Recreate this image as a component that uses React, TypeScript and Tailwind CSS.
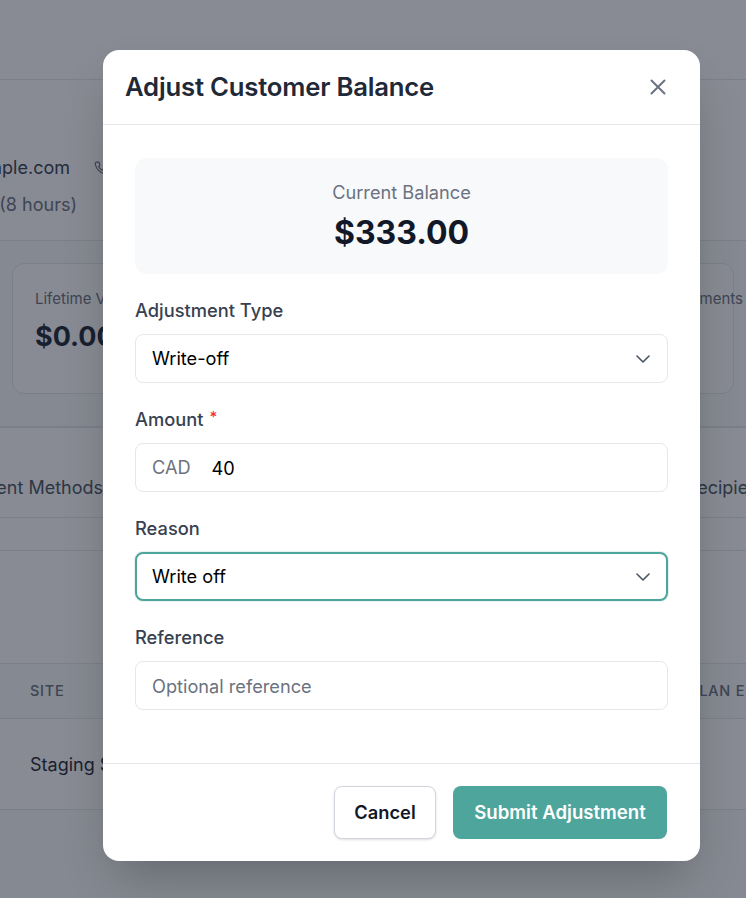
import { useState } from 'react'

function Chevron() {
  return (
    <svg
      width="14"
      height="8"
      viewBox="0 0 14 8"
      fill="none"
      stroke="#4b5563"
      strokeWidth="1.6"
      strokeLinecap="round"
      strokeLinejoin="round"
      className="pointer-events-none absolute right-[18px] top-1/2 -translate-y-1/2"
    >
      <path d="M1 1l6 6 6-6" />
    </svg>
  )
}

function Field({ label, required, children }: { label: string; required?: boolean; children: React.ReactNode }) {
  return (
    <div>
      <label className="mb-3 block text-[18.3px] leading-6 font-medium text-[#374151]">
        {label}
        {required && <span className="ml-[6px] align-top text-[15px] leading-5 text-red-500">*</span>}
      </label>
      {children}
    </div>
  )
}

function Background() {
  return (
    <div className="flex min-h-[898px] flex-col bg-[#f9fafb] text-[#374151]">
      <div className="h-[80px] border-b border-gray-200 bg-white" />

      <div className="flex h-[161px] flex-col gap-[11px] border-b border-gray-200 bg-white pt-[75px]">
        <div className="flex items-center gap-[24px] leading-[26px]">
          <div className="flex w-[70px] justify-end overflow-hidden whitespace-nowrap text-[18px]">
            john@example.com
          </div>
          <svg width="14" height="14" viewBox="0 0 24 24" fill="none" stroke="#6b7280" strokeWidth="2">
            <path d="M22 16.9v3a2 2 0 0 1-2.2 2 19.8 19.8 0 0 1-8.6-3.1 19.5 19.5 0 0 1-6-6A19.8 19.8 0 0 1 2.1 4.2 2 2 0 0 1 4.1 2h3a2 2 0 0 1 2 1.7c.1.9.4 1.8.7 2.7a2 2 0 0 1-.5 2.1L8 9.8a16 16 0 0 0 6 6l1.3-1.3a2 2 0 0 1 2.1-.4c.9.3 1.8.6 2.7.7a2 2 0 0 1 1.7 2z" />
          </svg>
        </div>
        <div className="flex w-[77px] justify-end overflow-hidden whitespace-nowrap text-[18px] leading-[26px] text-[#6b7280]">
          Customer since today (8 hours)
        </div>
      </div>

      <div className="flex h-[187px] items-start justify-between border-b-2 border-gray-200 px-[12px] pt-[22px]">
        <div className="flex h-[131px] w-[300px] flex-col gap-[6px] rounded-xl border border-gray-200 bg-white px-[22px] pt-[24px]">
          <div className="text-[15px] text-[#6b7280]">Lifetime Value</div>
          <div className="text-[27px] font-bold text-[#1f2937]">$0.00</div>
        </div>
        <div className="flex h-[131px] w-[300px] justify-end rounded-xl border border-gray-200 bg-white pt-[24px]">
          <div className="-mr-[10px] whitespace-nowrap text-[15px] text-[#6b7280]">Total Adjustments</div>
        </div>
      </div>

      <div className="flex h-[90px] items-end justify-between border-b border-gray-200 bg-white pb-[16px] text-[18px] text-[#4b5563]">
        <div className="flex w-[103px] justify-end overflow-hidden whitespace-nowrap">Payment Methods</div>
        <div className="-mr-[28px] whitespace-nowrap">Recipients</div>
      </div>
      <div className="h-[33px] border-b border-gray-200 bg-white" />
      <div className="h-[113px] border-b border-gray-200 bg-white" />
      <div className="flex h-[55px] items-center justify-between border-b border-gray-200 bg-[#f9fafb] pl-[30px] text-[14.5px] font-medium tracking-wider text-[#6b7280]">
        <span>SITE</span>
        <span className="-mr-[22px]">PLAN END</span>
      </div>
      <div className="flex h-[91px] items-center border-b border-gray-200 bg-white pl-[30px] text-[18px] text-[#1f2937]">
        Staging Site
      </div>
    </div>
  )
}

export default function App() {
  const [amount, setAmount] = useState('40')
  const [reference, setReference] = useState('')

  return (
    <div className="relative min-h-[898px] overflow-hidden font-['Inter',sans-serif]">
      <Background />

      <div className="absolute inset-0 bg-[#111827]/50" />

      <div className="absolute left-[103px] top-[50px] flex w-[597px] flex-col rounded-2xl bg-white shadow-2xl">
        <div className="flex h-[75px] items-center justify-between border-b border-gray-200 pl-[22px] pr-[34px]">
          <h2 className="text-[25.7px] font-semibold tracking-[-0.2px] text-[#1f2937]">Adjust Customer Balance</h2>
          <svg width="16" height="16" viewBox="0 0 16 16" fill="none" stroke="#6b7280" strokeWidth="2" strokeLinecap="round">
            <path d="M1.5 1.5l13 13M14.5 1.5l-13 13" />
          </svg>
        </div>

        <div className="flex flex-col gap-6 px-8 pt-[33px] pb-[53px]">
          <div className="flex h-[116px] flex-col items-center justify-center gap-[11px] rounded-xl bg-[#f8f9fb] pb-[2px]">
            <div className="text-[18.2px] leading-6 text-[#6b7280]">Current Balance</div>
            <div className="text-[32px] leading-9 font-bold text-[#111827]">$333.00</div>
          </div>

          <Field label="Adjustment Type">
            <div className="relative">
              <select
                defaultValue="write-off"
                className="h-[49px] w-full appearance-none rounded-lg border border-gray-200 bg-white px-4 text-[18.2px] text-black outline-none"
              >
                <option value="credit">Credit</option>
                <option value="debit">Debit</option>
                <option value="write-off">Write-off</option>
              </select>
              <Chevron />
            </div>
          </Field>

          <Field label="Amount" required>
            <div className="flex h-[49px] items-center rounded-lg border border-gray-200 bg-white pl-4">
              <span className="text-[18.2px] text-[#6b7280]">CAD</span>
              <input
                value={amount}
                onChange={(e) => setAmount(e.target.value)}
                className="ml-[21px] h-full flex-1 bg-transparent text-[18.2px] text-black outline-none"
              />
            </div>
          </Field>

          <Field label="Reason">
            <div className="relative">
              <select
                defaultValue="write-off"
                className="h-[49px] w-full appearance-none rounded-lg border-2 border-[#4ea59c] bg-white px-[15px] text-[18.2px] text-black shadow-[0_0_0_1px_rgba(78,165,156,0.15)] outline-none"
              >
                <option value="write-off">Write off</option>
                <option value="goodwill">Goodwill</option>
                <option value="correction">Correction</option>
              </select>
              <Chevron />
            </div>
          </Field>

          <Field label="Reference">
            <input
              value={reference}
              onChange={(e) => setReference(e.target.value)}
              placeholder="Optional reference"
              className="h-[49px] w-full rounded-lg border border-gray-200 bg-white px-4 text-[18.2px] text-black outline-none placeholder:text-[#6b7280]"
            />
          </Field>
        </div>

        <div className="flex justify-end gap-[17px] border-t border-gray-200 pt-[22px] pr-[33px] pb-[22px]">
          <button className="h-[53px] w-[102px] rounded-lg border border-gray-300 bg-white text-[18.3px] font-semibold text-[#111827] shadow-sm">
            Cancel
          </button>
          <button className="h-[53px] w-[214px] rounded-lg bg-[#4ea59c] text-[18.6px] font-semibold text-white">
            Submit Adjustment
          </button>
        </div>
      </div>
    </div>
  )
}
